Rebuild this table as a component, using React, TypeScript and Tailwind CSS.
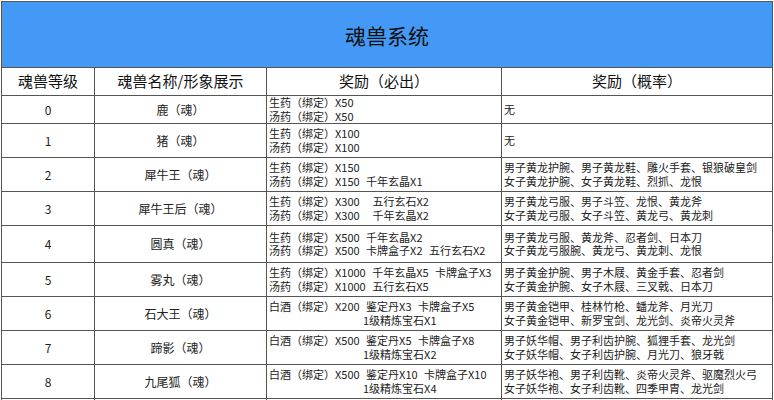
const ROWS = [
  { level: '0', name: '鹿（魂）', must: ['生药（绑定）X50', '汤药（绑定）X50'], rate: ['无'], h: 'h-[28px]' },
  { level: '1', name: '猪（魂）', must: ['生药（绑定）X100', '汤药（绑定）X100'], rate: ['无'], h: 'h-[34px]' },
  {
    level: '2',
    name: '犀牛王（魂）',
    must: ['生药（绑定）X150', '汤药（绑定）X150 千年玄晶X1'],
    rate: ['男子黄龙护腕、男子黄龙鞋、雕火手套、银狼破皇剑', '女子黄龙护腕、女子黄龙鞋、烈抓、龙恨'],
    h: 'h-[34px]',
  },
  {
    level: '3',
    name: '犀牛王后（魂）',
    must: ['生药（绑定）X300  五行玄石X2', '汤药（绑定）X300  千年玄晶X2'],
    rate: ['男子黄龙弓服、男子斗笠、龙恨、黄龙斧', '女子黄龙弓服、女子斗笠、黄龙弓、黄龙刺'],
    h: 'h-[34px]',
  },
  {
    level: '4',
    name: '圆真（魂）',
    must: ['生药（绑定）X500 千年玄晶X2', '汤药（绑定）X500 卡牌盒子X2 五行玄石X2'],
    rate: ['男子黄龙弓服、黄龙斧、忍者剑、日本刀', '女子黄龙弓服腕、黄龙弓、黄龙刺、龙恨'],
    h: 'h-[37px]',
  },
  {
    level: '5',
    name: '雾丸（魂）',
    must: ['生药（绑定）X1000 千年玄晶X5 卡牌盒子X3', '汤药（绑定）X1000 五行玄石X5'],
    rate: ['男子黄金护腕、男子木屐、黄金手套、忍者剑', '女子黄金护腕、女子木屐、三叉戟、日本刀'],
    h: 'h-[34px]',
  },
  {
    level: '6',
    name: '石大王（魂）',
    must: ['白酒（绑定）X200 鉴定丹X3 卡牌盒子X5', '1级精炼宝石X1'],
    rate: ['男子黄金铠甲、桂林竹枪、蟠龙斧、月光刀', '女子黄金铠甲、新罗宝剑、龙光剑、炎帝火灵斧'],
    h: 'h-[34px]',
    indent: true,
  },
  {
    level: '7',
    name: '蹄影（魂）',
    must: ['白酒（绑定）X500 鉴定丹X5 卡牌盒子X8', '1级精炼宝石X2'],
    rate: ['男子妖华帽、男子利齿护腕、狐狸手套、龙光剑', '女子妖华帽、女子利齿护腕、月光刀、狼牙戟'],
    h: 'h-[34px]',
    indent: true,
  },
  {
    level: '8',
    name: '九尾狐（魂）',
    must: ['白酒（绑定）X500 鉴定丹X10 卡牌盒子X10', '1级精炼宝石X4'],
    rate: ['男子妖华袍、男子利齿靴、炎帝火灵斧、驱魔烈火弓', '女子妖华袍、女子利齿靴、四季甲胄、龙光剑'],
    h: 'h-[34px]',
    indent: true,
  },
];

const cell = 'border border-[#555] p-0';

export default function App() {
  return (
    <div className="w-[774px] h-[400px] overflow-hidden bg-white pt-px pl-px font-['Noto_Sans_CJK_SC',sans-serif] text-[#222]">
      <table className="w-[772px] table-fixed border-collapse">
        <colgroup>
          <col className="w-[93px]" />
          <col className="w-[172px]" />
          <col className="w-[235px]" />
          <col />
        </colgroup>
        <tbody>
          <tr className="h-[66px]">
            <td colSpan={4} className={`${cell} bg-[#4499f6] pt-[2px] text-center text-[21px] font-normal text-[#111]`}>
              魂兽系统
            </td>
          </tr>
          <tr className="h-[28px] text-center text-[15px] font-normal text-[#111]">
            <td className={cell}>魂兽等级</td>
            <td className={cell}>魂兽名称/形象展示</td>
            <td className={cell}>奖励（必出）</td>
            <td className={cell}>奖励（概率）</td>
          </tr>
          {ROWS.map((r) => (
            <tr key={r.level} className={`${r.h} text-[11px] leading-[13.5px]`}>
              <td className={`${cell} text-center text-[12px]`}>{r.level}</td>
              <td className={`${cell} text-center text-[12px]`}>{r.name}</td>
              <td className={`${cell} pl-[2px]`}>
                {r.must.map((line, i) => (
                  <div
                    key={i}
                    className={`whitespace-pre [word-spacing:4px] ${r.indent && i === 1 ? 'pl-[94px]' : ''}`}
                  >
                    {line}
                  </div>
                ))}
              </td>
              <td className={`${cell} pl-[2px]`}>
                {r.rate.map((line, i) => (
                  <div key={i} className="whitespace-pre">
                    {line}
                  </div>
                ))}
              </td>
            </tr>
          ))}
          <tr className="h-[34px]">
            <td className={cell}></td>
            <td className={cell}></td>
            <td className={cell}></td>
            <td className={cell}></td>
          </tr>
        </tbody>
      </table>
    </div>
  );
}
